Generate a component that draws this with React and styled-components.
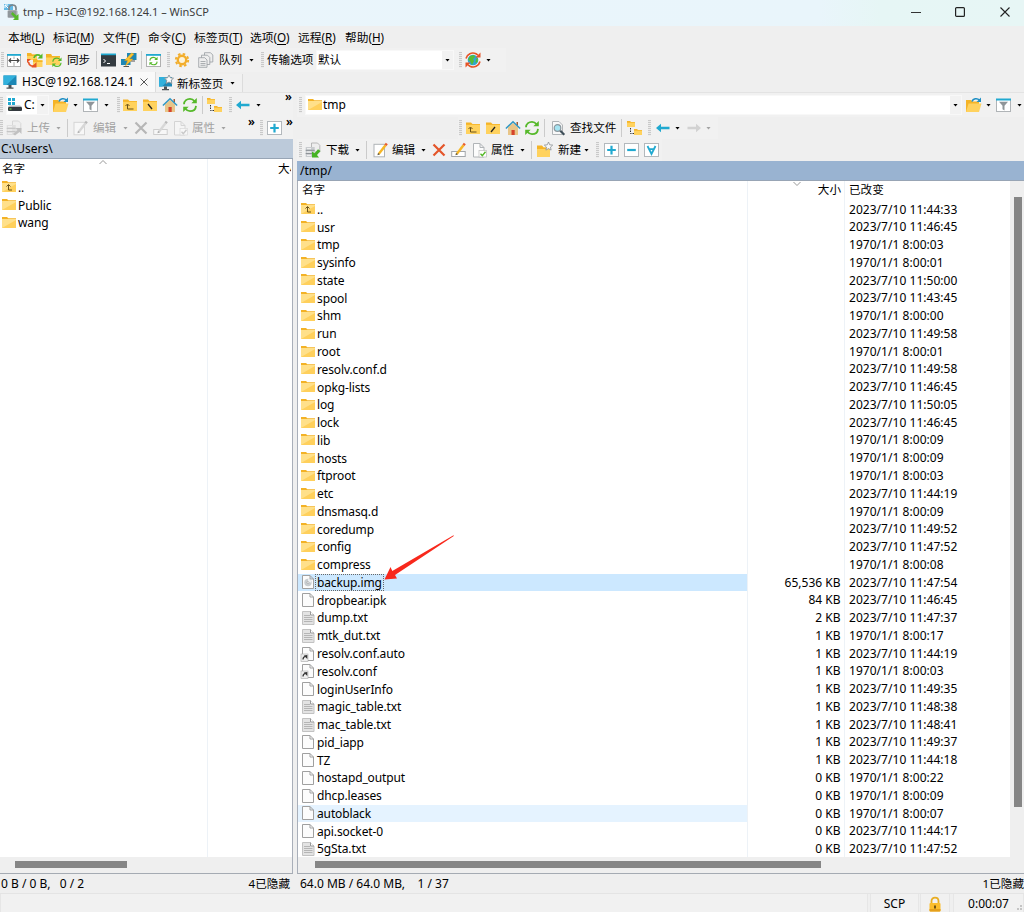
import React from "react";
import styled, { createGlobalStyle, css } from "styled-components";

const Global = createGlobalStyle`
  *{box-sizing:border-box}
  body{margin:0;background:#efefef;overflow:hidden}
  #root{font:12px/16px "Noto Sans","Noto Sans CJK SC",sans-serif;color:#000}
`;
const Window = styled.div`width:1024px;height:912px;display:flex;flex-direction:column;background:#efefef;white-space:pre;overflow:hidden;`;
const TitleBar = styled.header`height:26px;flex:none;display:flex;align-items:center;padding:0 14px 3px 4px;background:linear-gradient(90deg,#eaf5fb 0%,#e9f5fb 80%,#e6f6f5 86%,#e7f6f5 100%);color:#3c3c3c;`;
const Caption = styled.span`margin-left:3px;flex:1;font-size:11px;padding-top:1px;`;
const WinButton = styled.span`width:10px;height:14px;margin-left:${(p) => p.$m}px;display:flex;align-items:center;justify-content:center;`;
const MenuBar = styled.nav`height:22px;flex:none;display:flex;align-items:center;padding:0 0 1px 8px;font-size:11.7px;`;
const MenuItem = styled.span`width:${(p) => p.$w}px;u{text-underline-offset:2px}`;
const Bar = styled.div`height:${(p) => p.$h}px;flex:none;display:flex;align-items:center;background:#f1f1f1;width:${(p) => (p.$w ? p.$w + "px" : "100%")};margin-left:${(p) => p.$ml || 0}px;`;
const Label = styled.span`flex:none;width:${(p) => (p.$w ? p.$w + "px" : "auto")};margin-left:${(p) => p.$m || 0}px;color:${(p) => (p.$off ? "#a3a3a3" : "#000")};font-size:${(p) => p.$fs || 11.6}px;padding-top:${(p) => p.$pt || 0}px;`;
const Grip = styled.i`flex:none;width:3px;height:16px;margin-left:${(p) => p.$m || 0}px;background:repeating-linear-gradient(180deg,#c9c9c9 0 1px,#ececec 1px 2px);`;
const Sep = styled.i`flex:none;width:1px;height:18px;margin-left:${(p) => p.$m || 0}px;background:#cbcbcb;`;
const CaretMark = styled.i`flex:none;width:5px;height:3px;margin-left:${(p) => p.$m || 0}px;background:${(p) => (p.$off ? "#a3a3a3" : "#000")};clip-path:polygon(0 0,100% 0,50% 100%);`;
const Combo = styled.div`flex:none;width:${(p) => p.$w}px;height:20px;margin-left:${(p) => p.$m}px;background:#fff;border:1px solid #f8f8f8;display:flex;align-items:center;`;
const ComboButton = styled.span`margin-left:auto;width:11px;height:18px;background:#f2f2f2;display:flex;align-items:center;justify-content:center;`;
const More = styled.span`flex:none;margin:${(p) => p.$t || 0}px 0 0 ${(p) => p.$m}px;width:7px;align-self:flex-start;font-size:12px;line-height:8px;font-weight:600;`;
const Svg = styled.svg`flex:none;display:block;margin-left:${(p) => p.$m || 0}px;${(p) => p.$off && css`filter:grayscale(1);opacity:.45;`}`;

const TabStrip = styled.div`height:21px;flex:none;display:flex;align-items:flex-end;border-bottom:1px solid #e3e3e3;`;
const Tab = styled.div`height:${(p) => (p.$active ? 20 : 18)}px;width:${(p) => p.$w}px;display:flex;align-items:center;background:${(p) => (p.$active ? "#f9f9f9" : "#f1f1f1")};border-right:1px solid #dcdcdc;`;

const Panes = styled.main`flex:1;display:flex;min-height:0;`;
const Pane = styled.section`width:${(p) => p.$w}px;flex:none;display:flex;flex-direction:column;margin-left:${(p) => p.$ml || 0}px;`;
const PathBar = styled.div`height:${(p) => p.$h}px;flex:none;line-height:${(p) => p.$h - 1}px;background:${(p) => p.$bg};padding-left:${(p) => p.$pl}px;border-bottom:1px solid #98a5b5;`;
const ListFrame = styled.div`flex:1;min-height:0;display:flex;flex-direction:column;border-bottom:1px solid #a5abb3;border-right:${(p) => (p.$right ? "1px solid #a9afb9" : "0")};border-left:${(p) => (p.$left ? "1px solid #a9afb9" : "0")};`;
const ListBody = styled.div`flex:1;min-height:0;display:flex;`;
const Column = styled.div`width:${(p) => p.$w}px;flex:none;background:#fff;border-right:1px solid ${(p) => (p.$line ? "#edf2f7" : "#fff")};overflow:hidden;`;
const Head = styled.div`height:19.5px;padding:${(p) => p.$pt ?? 1}px ${(p) => p.$pr || 0}px 0 ${(p) => p.$pl || 0}px;display:flex;justify-content:${(p) => (p.$end ? "flex-end" : "flex-start")};font-size:11.6px;position:relative;`;
const SortMark = styled.svg`position:absolute;top:0;left:${(p) => p.$x}px;`;
const Cell = styled.div`height:17.77px;line-height:17.77px;display:flex;align-items:center;padding:0 ${(p) => p.$pr || 0}px 0 ${(p) => p.$pl || 0}px;justify-content:${(p) => (p.$end ? "flex-end" : "flex-start")};background:${(p) => p.$bg || "transparent"};position:relative;letter-spacing:${(p) => p.$ls || 0}px;`;
const Name = styled.span`padding:0 1px;line-height:15px;letter-spacing:-.12px;${(p) => p.$focus && css`outline:1px dotted #666;outline-offset:0;`}`;
const HScroll = styled.div`height:16px;flex:none;background:#efefef;padding:4px 0 0 ${(p) => p.$x}px;`;
const VScroll = styled.div`flex:1;background:#efefef;padding:16px 0 0 4px;`;
const Thumb = styled.div`width:${(p) => p.$w}px;height:${(p) => p.$h}px;background:#868686;`;
const PaneStatus = styled.footer`height:19px;flex:none;display:flex;justify-content:space-between;padding:2px ${(p) => p.$pr}px 0 ${(p) => p.$pl}px;`;
const Hidden = styled.span`font-size:11.6px;`;
const BottomBar = styled.footer`height:19px;flex:none;display:flex;align-items:stretch;border-top:1px solid #e4e4e4;`;
const BottomCell = styled.div`width:${(p) => p.$w}px;flex:none;margin-left:${(p) => p.$m || 0}px;border:1px solid #e6e6e6;border-width:0 1px 0 1px;background:#f1f1f1;display:flex;align-items:center;justify-content:center;padding-top:1px;position:relative;`;
const Arrow = styled.svg`position:absolute;left:83px;top:-41px;z-index:2;`;
const SizeGrip = styled.svg`position:absolute;right:0;bottom:0;`;

const Y = "#ffd25e", YD = "#f5b427", C = "#20a9d0", G = "#56b92a", GR = "#a2a6aa";
const folder = <><path d="M1 2.500h5l1.500 1.500H15v4H1z" fill={YD} /><path d="M1 4.800h14V14H1z" fill={Y} /></>;
const listFolder = <><path d="M1 2h5l1.300 1.300H15v4H1z" fill="#f3b226" /><path d="M1 4h14v9H1z" fill="#ffe08a" /><path d="M1 13l14-8v8z" fill="#ffd05c" /></>;
const page = (x = 2, s = "#a0a0a0") => <path d={`M${x}.5 1.500h7.500l3.500 3.500v9.500h-11z M${x + 8} 1.500v3.500h3.500`} fill="#fcfcfc" stroke={s} strokeWidth="1" />;
const smallFolder = (x, y) => <><path d={`M${x} ${y}h3l1 1h4v3h-8z`} fill={YD} /><path d={`M${x} ${y + 1.7}h8v4.300h-8z`} fill={Y} /></>;
const pencil = <><path d="M5 11l6.500-8.500 2 1.500L7 12.300l-2.300.8z" fill="#f6b626" /><path d="M11.500 2.500l1.300-1.800 2 1.500-1.300 1.800z" fill="#e95b2c" /><path d="M5 11l2 1.300-2.500 1z" fill="#555" /></>;
const box = <rect x=".5" y="1.500" width="14" height="13" fill="#fff" stroke="#b3b8bc" />;
const monitor = (x = 1, y = 1) => <><rect x={x} y={y} width="13" height="9.500" fill="#1d87b5" /><path d={`M${x} ${y}h13L${x + 3} ${y + 9.5}h-3z`} fill="#31b0dc" /><path d={`M${x + 5} ${y + 9.5}h3v2.500h2v1.200h-7v-1.200h2z`} fill="#4d5357" /></>;
const docs = <g fill="#eeeeee" stroke="#989da1" strokeWidth=".8"><path d="M6.500.7h6l2.300 2.300v7H6.500z" /><path d="M3.500 3.200h6l2.300 2.300v7H3.500z" /><path d="M.7 5.700h6L9 8v7.300H.7z" /><path d="M2.500 9.500h5M2.500 11.500h5M2.500 13.300h5" strokeWidth=".8" /></g>;
const server = <><path d="M6.500 1h6l2.300 2.300V10H6.500z" fill="#eee" stroke="#aaa" strokeWidth=".8" /><rect x=".7" y="5" width="9" height="10" fill="#c9cccf" /><path d="M.7 8.300h9M.7 11.600h9" stroke="#888d91" /><path d="M2 6.700h4M2 10h4M2 13.300h4" stroke="#f7f7f7" /></>;
const cycle = (c) => <><path d="M2 7.200C2.200 3.700 5 1.800 8 1.800c2 0 3.500 1 4.600 2.400M14 8.800c-.3 3.500-3 5.400-6 5.400-2 0-3.500-1-4.600-2.400" fill="none" stroke={c} strokeWidth="1.800" /><path d="M14.800.9v5.300H9.300zM1.200 15.100V9.800h5.500z" fill={c} /></>;

const art = {
  folder: listFolder,
  listUp: <>{listFolder}<path d="M5.500 7.500l2-2 2 2M7.500 6v5h3.500" fill="none" stroke="#6b5218" /></>,
  up: <>{folder}<path d="M3.500 9l2-2 2 2M5.500 7.500V12h6" fill="none" stroke="#6b5218" /></>,
  root: <>{folder}<path d="M6 7l4 5" stroke="#222" strokeWidth="1.300" /></>,
  rootR: <>{folder}<path d="M10 7l-4 5" stroke="#222" strokeWidth="1.300" /></>,
  app: <><path d="M0 0h9v6H0z" fill="#62b9e6" /><path d="M1 1l4 4M1 1v3M1 1h3" stroke="#fff" /><path d="M5 6V4c0-4 7-4 7 0v2" fill="none" stroke="#7d858a" strokeWidth="1.700" /><rect x="3.500" y="6" width="10" height="8" rx="1.500" fill="#a7aeb2" /><path d="M4 8h8M4 10h8M4 12h8" stroke="#6f777c" strokeWidth=".8" /><path d="M8.500 8l4 3.800L14.500 10v6H9l1.800-2-3.800-4z" fill="#55b82b" /></>,
  compare: <><rect x="1.500" y="2.500" width="13" height="12" fill="#fff" stroke="#b0b0b0" /><path d="M1 2h14v1.800H1z" fill={C} /><path d="M8 4.500v2.500M8 10v4" stroke="#aaa" /><path d="M3 8.500h10M5 6.500L3 8.500l2 2M11 6.500l2 2-2 2" fill="none" stroke="#444" strokeWidth="1.100" /></>,
  sync2: <><path d="M0 1h4l1 1.500h5V8H0z" fill={Y} /><path d="M6 8h9.500v7H6z" fill={Y} /><path d="M0 1h4l1 1.500h5V4H0zM6 7h4l1 1.500h4.500V10H6z" fill={YD} /><path d="M7 6c.5-3 4-4 6.500-2" fill="none" stroke={G} strokeWidth="1.700" /><path d="M15.500 1.500V6.500H10.500z" fill={G} /><path d="M1.500 10c.5 4 4 5 6.500 3" fill="none" stroke="#e65326" strokeWidth="1.700" /><path d="M0 11V7h4zM9.500 10v5.500H4.500z" fill="#e65326" /></>,
  syncFolder: <><path d="M0 2h5l1 2h8v9H0z" fill={Y} /><path d="M0 2h5l1 2h8v1.500H0z" fill={YD} /><g transform="translate(5.500 4.800) scale(.68)">{cycle(G)}</g></>,
  console: <><rect x="0" y="2" width="15" height="12.500" fill="#343b40" /><path d="M0 1.500h15v1.700H0z" fill={C} /><path d="M2.500 7l2 2-2 2M6 11.500h3" fill="none" stroke="#fff" strokeWidth="1" /></>,
  putty: <><rect x="6" y="1" width="9.500" height="7" fill="#1d87b5" /><rect x="0" y="7" width="9.500" height="6" fill="#1d87b5" /><path d="M10 9h4M2.500 14.500H8" stroke="#555" strokeWidth="1.200" /><path d="M10.500 1L3.500 8.500h3L4.500 14 12 7H8.500L13 2z" fill="#fcc32f" stroke="#da9213" strokeWidth=".4" /></>,
  refreshBox: <><rect x=".5" y="2.500" width="14" height="12" fill="#fff" stroke="#b0b0b0" /><path d="M0 2h15v1.800H0z" fill={C} /><g transform="translate(2.700 4.300) scale(.6)">{cycle(G)}</g></>,
  gear: <><circle cx="8" cy="8" r="4.200" fill="#fdf3d8" stroke="#f2ad2b" strokeWidth="2.400" /><circle cx="8" cy="8" r="6.200" fill="none" stroke="#f2ad2b" strokeWidth="1.900" strokeDasharray="2.550 2.320" /></>,
  queue: docs,
  globe: <><circle cx="8" cy="8" r="5.300" fill="#31a6cf" /><path d="M5 4l4-1 1 2-2 2 1 2-2 4-2-4-2-1zM11 7l2-1-.5 4-2 1z" fill="#55bd35" /><path d="M1 6.500C2 2 7-.2 11 1.800l2 1.400M15 9.500c-1 4.500-6 6.700-10 4.700l-2-1.400" fill="none" stroke="#e65326" strokeWidth="1.600" /><path d="M15.500.5v5h-5zM.5 15.500v-5h5z" fill="#e65326" /></>,
  monitor: monitor(1.5, 1.5),
  newTab: <>{monitor(1, 2)}<path d="M11 0l1.400 2.800 3.100.4-2.300 2.100.7 3.200L11 7l-2.900 1.500.7-3.200-2.300-2.100 3.100-.4z" fill="#fafafa" stroke="#8c9296" strokeWidth=".9" /></>,
  drive: <><path d="M1 1h3v3H1zM5 1h3v3H5zM1 5h3v3H1zM5 5h3v3H5z" fill={C} /><path d="M2 8.500h11l2 1.500H1z" fill="#b4b8bb" /><rect x="1" y="10" width="14" height="4" rx="1" fill="#343a3e" /><path d="M2.500 12h2" stroke="#68d24f" strokeWidth="1.200" /></>,
  open: <><path d="M0 3h5l1.500 1.500H13V15H0z" fill={YD} /><path d="M2.500 6.500H15.500l-2.500 8.500H0z" fill={Y} /><path d="M6 4.500C7 1.500 11 .8 13.500 3" fill="none" stroke="#1e8fc4" strokeWidth="1.600" /><path d="M15 .5v4.500h-4.500z" fill="#1e8fc4" /></>,
  filter: <><rect x=".5" y="2.500" width="14" height="12" fill="#fff" stroke="#b0b4b7" /><path d="M0 1.500h15v2H0z" fill={C} /><path d="M3 4.800h9L8.500 8.800V13.500l-2-1.300V8.800z" fill="#8f9599" /></>,
  home: <><path d="M3 7.500L8 3l5 4.500V15H3z" fill="#e8c588" /><path d="M6.500 10h3.200v5H6.500z" fill="#d6432b" /><path d="M11.500 2H13v4l-1.500-1z" fill="#a35c38" /><path d="M.9 8.500L8 1.700l7.100 6.800" fill="none" stroke="#2f97c4" strokeWidth="1.500" /></>,
  refresh: cycle(G),
  tree: <>{smallFolder(0, 1)}{smallFolder(7, 9)}<path d="M3.500 8v5.500H7" fill="none" stroke="#333" strokeDasharray="1.500 1" /></>,
  left: <path d="M1 8l5-4.200v3h8.500v2.400H6v3z" fill={C} />,
  right: <path d="M15 8l-5-4.200v3H1.500v2.400H10v3z" fill="#d2d2d2" />,
  upload: <>{server}<path d="M7 14l4.500-4L9.500 8H15.500v6l-2-2L9 15.500z" fill="#888" /></>,
  download: <>{server}<path d="M15.500 6.500L12 10.500l2 2.500H7V7l2.500 1.700 3.500-4z" transform="translate(0 2.500)" fill="#45b324" /></>,
  edit: <><rect x="1" y="2.300" width="10.500" height="12.500" fill="#fff" stroke="#b0b4b7" />{pencil}</>,
  x: <path d="M2.500 2.500L13.500 13.500M13.500 2.500L2.500 13.500" stroke="#e4552a" strokeWidth="2.200" />,
  rename: <><rect x=".7" y="9.500" width="13.500" height="5" fill="#fff" stroke={GR} />{pencil}</>,
  props: <><path d="M1.500 1.500h6.500l4 4v9.500h-10.500zM8 1.500v4h4" fill="#fcfcfc" stroke="#b0b4b7" /><rect x="7" y="8.500" width="7.500" height="6.500" fill="#fff" stroke="#bbb" strokeWidth=".7" /><path d="M8.500 11.800l1.800 1.800 3.200-3.800" fill="none" stroke={G} strokeWidth="1.400" /></>,
  find: <><path d="M2.500 1.500h6.500l3.500 3.500v9.500h-10z" fill="#f8f8f8" stroke="#b0b4b7" /><circle cx="7.500" cy="8" r="3.300" fill="#a6e4f2" stroke="#8a979e" strokeWidth="1.200" /><path d="M10.300 10.800l4 4" stroke="#3f4f59" strokeWidth="2.200" /></>,
  newFolder: <><path d="M0 4h5l1.500 1.500H13V15H0z" fill={Y} /><path d="M0 3.500h5l1.500 2H13V7H0z" fill={YD} /><path d="M11.500 0l1.200 2.800 3 .3-2.200 2 .6 3-2.600-1.500-2.600 1.500.6-3-2.200-2 3-.3z" fill="#f7f7f7" stroke="#8d9296" strokeWidth=".8" /></>,
  plus: <>{box}<path d="M7.500 3.800v8.600M3.200 8h8.600" stroke={C} strokeWidth="2.200" /></>,
  minus: <>{box}<path d="M3.200 8h8.600" stroke={C} strokeWidth="2.200" /></>,
  all: <>{box}<path d="M3.500 4l4 8 4-8M5.200 7.200h4.600" fill="none" stroke={C} strokeWidth="1.800" /></>,
  file: page(),
  text: <><path d="M2.500 1.500h8l3.500 3.500v9.500H2.500z" fill="#e3e3e3" stroke="#c2c2c2" /><path d="M4 5.500h6M4 7.500h8.500M4 9.500h8.500M4 11.500h8.500" stroke="#b0b0b0" strokeWidth=".9" /><path d="M10.500 1.500V5H14" fill="#fff" stroke="#999" /></>,
  link: <>{page(2)}<rect x="1" y="8" width="7" height="7.500" fill="#eee" stroke="#aaa" strokeWidth=".6" /><path d="M3 13.500c0-2 1-3 2.500-3.200" fill="none" stroke="#333" strokeWidth="1.200" /><path d="M7.300 9v4l-3.500-3.500z" fill="#333" /></>,
  disc: <>{page(2)}<circle cx="8" cy="8.500" r="3.700" fill="#c8cdd0" /><path d="M8 5a3.700 3.700 0 013.500 3.500H8z" fill="#eef1f3" /><circle cx="8" cy="8.500" r="1" fill="#fff" stroke="#888" strokeWidth=".5" /></>,
  lock: <><path d="M4.500 8V5c0-4.500 7-4.500 7 0v3" fill="none" stroke="#e9ad22" strokeWidth="1.800" /><rect x="2.500" y="7" width="11" height="8.500" rx="1" fill="#fbbd2c" /><path d="M2.500 13h11v1.500q0 1-1 1h-9q-1 0-1-1z" fill="#e5a01c" /><path d="M8 9.500v3" stroke="#503a0c" strokeWidth="1.600" /></>,
};
const Icon = ({ n, m, off, s = 16 }) => <Svg $m={m} $off={off} width={s} height={s} viewBox="0 0 16 16">{art[n]}</Svg>;

const menus = [["本地", "L", 45], ["标记", "M", 50], ["文件", "F", 45], ["命令", "C", 46], ["标签页", "T", 56], ["选项", "O", 48], ["远程", "R", 47], ["帮助", "H", 45]];
const d = "2023/7/10 ", e = "1970/1/1 ";
const files = [
  ["listUp", "..", "", d + "11:44:33"],
  ["folder", "usr", "", d + "11:46:45"],
  ["folder", "tmp", "", e + "8:00:03"],
  ["folder", "sysinfo", "", e + "8:00:01"],
  ["folder", "state", "", d + "11:50:00"],
  ["folder", "spool", "", d + "11:43:45"],
  ["folder", "shm", "", e + "8:00:00"],
  ["folder", "run", "", d + "11:49:58"],
  ["folder", "root", "", e + "8:00:01"],
  ["folder", "resolv.conf.d", "", d + "11:49:58"],
  ["folder", "opkg-lists", "", d + "11:46:45"],
  ["folder", "log", "", d + "11:50:05"],
  ["folder", "lock", "", d + "11:46:45"],
  ["folder", "lib", "", e + "8:00:09"],
  ["folder", "hosts", "", e + "8:00:09"],
  ["folder", "ftproot", "", e + "8:00:03"],
  ["folder", "etc", "", d + "11:44:19"],
  ["folder", "dnsmasq.d", "", e + "8:00:09"],
  ["folder", "coredump", "", d + "11:49:52"],
  ["folder", "config", "", d + "11:47:52"],
  ["folder", "compress", "", e + "8:00:08"],
  ["disc", "backup.img", "65,536 KB", d + "11:47:54"],
  ["file", "dropbear.ipk", "84 KB", d + "11:46:45"],
  ["text", "dump.txt", "2 KB", d + "11:47:37"],
  ["text", "mtk_dut.txt", "1 KB", e + "8:00:17"],
  ["link", "resolv.conf.auto", "1 KB", d + "11:44:19"],
  ["link", "resolv.conf", "1 KB", e + "8:00:03"],
  ["file", "loginUserInfo", "1 KB", d + "11:49:35"],
  ["text", "magic_table.txt", "1 KB", d + "11:48:38"],
  ["text", "mac_table.txt", "1 KB", d + "11:48:41"],
  ["file", "pid_iapp", "1 KB", d + "11:49:37"],
  ["file", "TZ", "1 KB", d + "11:44:18"],
  ["file", "hostapd_output", "0 KB", e + "8:00:22"],
  ["file", "dhcp.leases", "0 KB", e + "8:00:09"],
  ["file", "autoblack", "0 KB", e + "8:00:07"],
  ["file", "api.socket-0", "0 KB", d + "11:44:17"],
  ["text", "5gSta.txt", "0 KB", d + "11:47:52"],
];
const rowBg = { "backup.img": "#cce8ff", autoblack: "#e5f3ff" };

export default function App() {
  return (
    <Window>
      <Global />
      <TitleBar>
        <Icon n="app" />
        <Caption>tmp – H3C@192.168.124.1 – WinSCP</Caption>
        <WinButton><svg width="10" height="10"><path d="M0 5.500h10" stroke="#333" /></svg></WinButton>
        <WinButton $m={34}><svg width="10" height="10"><rect x=".6" y=".6" width="8.800" height="8.800" rx="1" fill="none" stroke="#222" strokeWidth="1.200" /></svg></WinButton>
        <WinButton $m={35}><svg width="10" height="10"><path d="M.5.5l9 9M9.500.5l-9 9" stroke="#222" strokeWidth="1.100" /></svg></WinButton>
      </TitleBar>
      <MenuBar>
        {menus.map(([t, k, w]) => <MenuItem key={k} $w={w}>{t}(<u>{k}</u>)</MenuItem>)}
      </MenuBar>
      <Bar $h={24} $w={506}>
        <Grip $m={1} />
        <Icon n="compare" m={2} /><Icon n="sync2" m={5} /><Icon n="syncFolder" m={3} />
        <Label $m={5} $w={23}>同步</Label>
        <Sep $m={6} />
        <Icon n="console" m={4} /><Icon n="putty" m={4} />
        <Sep $m={4} />
        <Icon n="refreshBox" m={4} />
        <Grip $m={5} />
        <Icon n="gear" m={4} /><Icon n="queue" m={8} />
        <Label $m={5} $w={23}>队列</Label>
        <CaretMark $m={7} />
        <Grip $m={7} />
        <Label $m={3} $w={47}>传输选项</Label>
        <Combo $w={138} $m={2}>
          <Label $m={1}>默认</Label>
          <ComboButton><CaretMark /></ComboButton>
        </Combo>
        <Grip $m={5} />
        <Icon n="globe" m={3} />
        <CaretMark $m={5} />
      </Bar>
      <TabStrip>
        <Tab $active $w={156}>
          <Icon n="monitor" m={2} />
          <Label $m={4} $w={118} $fs={12}>H3C@192.168.124.1</Label>
          <svg width="8" height="8"><path d="M.5.5l7 7M7.500.5l-7 7" stroke="#555" /></svg>
        </Tab>
        <Tab $w={87}>
          <Icon n="newTab" m={2} />
          <Label $m={3} $w={47} $pt={1}>新标签页</Label>
          <CaretMark $m={6} />
        </Tab>
      </TabStrip>
      <Panes>
        <Pane $w={293}>
          <Bar $h={24} $w={293}>
            <Grip />
            <Combo $w={43} $m={3}>
              <Icon n="drive" m={0} />
              <Label $m={1} $w={11} $fs={12}>C:</Label>
              <ComboButton><CaretMark /></ComboButton>
            </Combo>
            <Icon n="open" m={4} /><CaretMark $m={4} />
            <Icon n="filter" m={5} /><CaretMark $m={5} />
            <Grip $m={8} />
            <Icon n="up" m={2} /><Icon n="root" m={4} /><Icon n="home" m={4} /><Icon n="refresh" m={4} />
            <Sep $m={4} />
            <Icon n="tree" m={4} />
            <Grip $m={6} />
            <Icon n="left" m={3} /><CaretMark $m={5} />
            <More $m={24}>»</More>
          </Bar>
          <Bar $h={22} $w={293}>
            <Grip />
            <Icon n="upload" m={3} off />
            <Label $m={5} $w={23} $off>上传</Label><CaretMark $off $m={6} />
            <Sep $m={6} />
            <Icon n="edit" m={5} off />
            <Label $m={4} $w={23} $off>编辑</Label><CaretMark $off $m={7} />
            <Icon n="x" m={5} off /><Icon n="rename" m={4} off /><Icon n="props" m={4} off />
            <Label $m={3} $w={23} $off>属性</Label><CaretMark $off $m={6} />
            <More $m={22} $t={1}>»</More>
            <Grip $m={5} />
            <Icon n="plus" m={4} />
            <More $m={3} $t={1}>»</More>
          </Bar>
          <PathBar $h={20} $pl={1} $bg="#bccada">C:\Users\</PathBar>
          <ListFrame $right>
            <ListBody>
              <Column $w={208} $line>
                <Head $pl={2} $pt={2}>名字
                  <SortMark $x={98} width="10" height="6"><path d="M1.500 5L5 1.500 8.500 5" fill="none" stroke="#999" /></SortMark>
                </Head>
                {[["listUp", ".."], ["folder", "Public"], ["folder", "wang"]].map(([i, n]) => (
                  <Cell key={n} $pl={1}><Icon n={i} /><Name>{n}</Name></Cell>
                ))}
              </Column>
              <Column $w={84}><Head $pl={70} $pt={2}>大小</Head></Column>
            </ListBody>
            <HScroll $x={15}><Thumb $w={112} $h={7} /></HScroll>
          </ListFrame>
          <PaneStatus $pl={1} $pr={3}><span>0 B / 0 B,   0 / 2</span><Hidden>4已隐藏</Hidden></PaneStatus>
        </Pane>
        <Pane $w={727} $ml={4}>
          <Bar $h={24} $w={727}>
            <Grip $m={2} />
            <Combo $w={657} $m={3}>
              <Icon n="folder" m={1} />
              <Label $fs={12}>tmp</Label>
              <ComboButton><CaretMark /></ComboButton>
            </Combo>
            <Icon n="open" m={4} /><CaretMark $m={4} />
            <Icon n="filter" m={5} /><CaretMark $m={5} />
          </Bar>
          <Bar $h={22} $w={260} $ml={161}>
            <Grip $m={1} />
            <Icon n="up" m={3} /><Icon n="rootR" m={4} /><Icon n="home" m={4} /><Icon n="refresh" m={3} />
            <Sep $m={4} />
            <Icon n="find" m={5} />
            <Label $m={4} $w={47}>查找文件</Label>
            <Sep $m={4} />
            <Icon n="tree" m={5} />
            <Grip $m={5} />
            <Icon n="left" m={4} /><CaretMark $m={4} />
            <Icon n="right" m={6} /><CaretMark $off $m={4} />
          </Bar>
          <Bar $h={22} $w={365}>
            <Grip $m={2} />
            <Icon n="download" m={3} />
            <Label $m={5} $w={23}>下载</Label><CaretMark $m={6} />
            <Sep $m={6} />
            <Icon n="edit" m={6} />
            <Label $m={3} $w={23}>编辑</Label><CaretMark $m={6} />
            <Icon n="x" m={5} /><Icon n="rename" m={4} /><Icon n="props" m={5} />
            <Label $m={3} $w={23}>属性</Label><CaretMark $m={6} />
            <Sep $m={6} />
            <Icon n="newFolder" m={5} />
            <Label $m={5} $w={23}>新建</Label><CaretMark $m={3} />
            <Grip $m={7} />
            <Icon n="plus" m={5} /><Icon n="minus" m={4} /><Icon n="all" m={4} />
          </Bar>
          <PathBar $h={20} $pl={3} $bg="#99b3d1">/tmp/</PathBar>
          <ListFrame $left>
            <ListBody>
              <Column $w={450} $line>
                <Head $pl={4}>名字</Head>
                {files.map(([i, n]) => (
                  <Cell key={n} $pl={2} $bg={rowBg[n]}>
                    <Icon n={i} /><Name $focus={n === "backup.img"}>{n}</Name>
                    {n === "backup.img" && (
                      <Arrow width="76" height="50" viewBox="381 531 76 50"><path d="M384.500 577.500l6-12.500 1.800 4L453.500 533.300l.3.8L395 573l2 3.500z" fill="#f8281c" /></Arrow>
                    )}
                  </Cell>
                ))}
              </Column>
              <Column $w={97} $line>
                <Head $end $pr={3}>大小
                  <SortMark $x={44} width="10" height="6"><path d="M1.500 1L5 4.500 8.500 1" fill="none" stroke="#999" /></SortMark>
                </Head>
                {files.map(([, n, s]) => <Cell key={n} $end $pr={3.5}>{s}</Cell>)}
              </Column>
              <Column $w={165}>
                <Head $pl={4}>已改变</Head>
                {files.map(([, n, , t]) => <Cell key={n} $pl={4} $ls={0.04}>{t}</Cell>)}
              </Column>
              <VScroll><Thumb $w={8} $h={610} /></VScroll>
            </ListBody>
            <HScroll $x={17}><Thumb $w={506} $h={7} /></HScroll>
          </ListFrame>
          <PaneStatus $pl={3} $pr={0}><span>64.0 MB / 64.0 MB,    1 / 37</span><Hidden>1已隐藏</Hidden></PaneStatus>
        </Pane>
      </Panes>
      <BottomBar>
        <BottomCell $w={868} />
        <BottomCell $w={49} $m={2}>SCP</BottomCell>
        <BottomCell $w={30} $m={1}><Icon n="lock" /></BottomCell>
        <BottomCell $w={71} $m={3}>0:00:07
          <SizeGrip width="8" height="8"><path d="M5 1h2v2H5zM2 4h2v2H2zM5 4h2v2H5z" fill="#c4c4c4" /></SizeGrip>
        </BottomCell>
      </BottomBar>
    </Window>
  );
}
